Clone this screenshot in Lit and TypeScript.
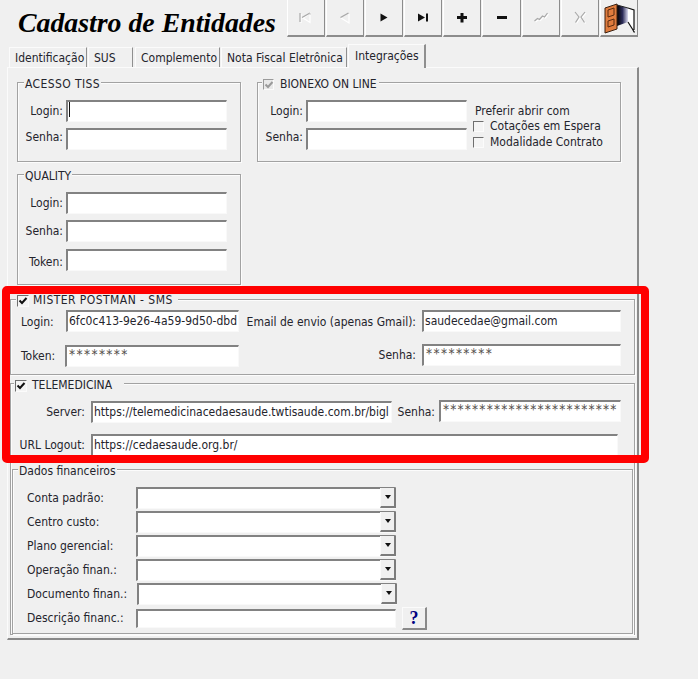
import { LitElement, html, css, svg } from "lit";
import { customElement } from "lit/decorators.js";

const TABS = [
  ["Identificação", 78, 1],
  ["SUS", 45, 2],
  ["Complemento", 85, 1],
  ["Nota Fiscal Eletrônica", 126, 1],
];

const emboss = (d: string, dark: string) => svg`
  <path d="${d}" transform="translate(1 1)" fill="none" stroke="#ffffff" stroke-width="1.200"/>
  <path d="${d}" fill="none" stroke="${dark}" stroke-width="1.200"/>`;

const ICONS = [
  svg`${emboss("M2 4v9", "#a8a8a8")}<path d="M5 9l7 4.500v-9z" fill="none" stroke="#fff" stroke-width="1.200"/><path d="M4 8.500l8-4.500" fill="none" stroke="#a8a8a8" stroke-width="1.400"/><path d="M12 4v2" stroke="#ccc"/>`,
  svg`<path d="M4 9l8 5v-9" fill="none" stroke="#fff" stroke-width="1.200"/><path d="M3.500 8.500l8-4.500" fill="none" stroke="#a8a8a8" stroke-width="1.400"/>`,
  svg`<path d="M4.500 4.500l7 4-7 4z" fill="#111"/>`,
  svg`<path d="M3 4.500l7 4-7 4z" fill="#111"/><rect x="11" y="4.500" width="2" height="8" fill="#111"/>`,
  svg`<path d="M6.500 4h3v3h3.500v3h-3.500v3.500h-3v-3.500h-3.500v-3h3.500z" fill="#111"/>`,
  svg`<rect x="3" y="7" width="10" height="3" fill="#111"/>`,
  emboss("M1.500 12l3-2.500 2 1 3-3.500 2 1 3-4", "#a8a8a8"),
  emboss("M3 3l4 5-3.500 5.500M13 3l-4 5 3.500 5.500", "#a8a8a8"),
];

@customElement("app-root")
export class AppRoot extends LitElement {
  static styles = css`
    :host {
      display: block;
      width: 698px;
      height: 679px;
      background: #f0f0f0;
      font-family: "DejaVu Sans Condensed", "DejaVu Sans", sans-serif;
      font-size: 12px;
      color: #24242c;
      overflow: hidden;
    }
    .root { position: relative; width: 698px; height: 679px; }
    .header { display: flex; height: 45px; }
    .title {
      width: 269px;
      padding: 5px 0 0 18px;
      box-sizing: content-box;
      font: italic bold 27.800px/36px "Liberation Serif", serif;
      color: #000;
      white-space: nowrap;
    }
    .toolbar { display: flex; height: 37px; }
    .tool {
      width: 36.100px;
      height: 35px;
      margin-right: 1px;
      background: #f0f0f0;
      border-right: 1.500px solid #8c8c8c;
      border-bottom: 2px solid #8c8c8c;
      border-left: 0.500px solid #fff;
      display: flex;
      align-items: center;
      justify-content: center;
      box-sizing: content-box;
    }
    .tool svg { width: 16px; height: 17px; }
    .tool .door { width: 32px; height: 32px; }
    .tabs { display: flex; height: 22px; padding-left: 9px; align-items: flex-end; position: relative; z-index: 1; }
    .tab {
      height: 20px;
      line-height: 21px;
      padding-left: 5px;
      text-align: left;
      white-space: nowrap;
      box-sizing: border-box;
      border-top: 1px solid #fbfbfb;
      border-left: 1px solid #fbfbfb;
      border-right: 1.500px solid #8f8f8f;
    }
    .tab.active {
      width: 78px;
      height: 24px;
      margin-bottom: -1px;
      line-height: 22px;
      padding-left: 6px;
      background: #f0f0f0;
      border-right-width: 2px;
    }
    .panel {
      margin-left: 7px;
      width: 632px;
      height: 573px;
      box-sizing: border-box;
      border-top: 1px solid #fbfbfb;
      border-left: 1px solid #fbfbfb;
      border-right: 2px solid #8a8a8a;
      border-bottom: 2px solid #8a8a8a;
      padding-top: 14px;
    }
    .top { display: flex; gap: 16px; margin-left: 9px; align-items: flex-start; }
    .col { display: flex; flex-direction: column; gap: 12px; }
    .group {
      position: relative;
      box-sizing: border-box;
      border: 1px solid #a2a2a2;
      box-shadow: 1px 1px 0 #fcfcfc, inset 1px 1px 0 #fcfcfc;
    }
    .legend {
      position: absolute;
      left: 6px;
      top: -6px;
      height: 15px;
      line-height: 15px;
      padding: 0 1px;
      display: flex;
      align-items: center;
      gap: 5px;
      background: #f0f0f0;
      white-space: nowrap;
    }
    .ls-a { letter-spacing: 0.400px; }
    .lb { left: 4px; top: -6px; gap: 6px; padding-right: 2px; }
    .lp { left: 5px; top: -7px; gap: 4px; padding-right: 5px; letter-spacing: 0.450px; }
    .lt { left: 3px; top: -6px; padding-right: 12px; }
    .ld { left: 5px; }
    .check {
      width: 11px;
      height: 11px;
      box-sizing: border-box;
      border-top: 1.500px solid #6e6e6e;
      border-left: 1.500px solid #6e6e6e;
      border-right: 1px solid #fbfbfb;
      border-bottom: 1px solid #fbfbfb;
      background: #f4f4f4;
      flex: none;
      display: block;
      position: relative;
    }
    .check svg { position: absolute; left: 0; top: 0; width: 10px; height: 10px; }
    .check.big { width: 12px; height: 12px; }
    .check.dis { background: #e9e9e9; border-color: #9a9a9a #fbfbfb #fbfbfb #9a9a9a; }
    .acesso { width: 224px; height: 80px; padding-top: 17px; }
    .quality { width: 224px; height: 111px; padding-top: 17px; }
    .bionexo { width: 364px; height: 80px; padding-top: 17px; display: flex; }
    .rows { display: flex; flex-direction: column; gap: 6px; }
    .row { display: flex; align-items: center; gap: 3px; }
    .row.low { margin-top: 1px; }
    .lab { text-align: right; white-space: nowrap; flex: none; }
    .w45 { width: 45px; }
    .up { margin-bottom: 5px; }
    .down { margin-top: 4px; }
    .input {
      height: 22px;
      line-height: 18px;
      box-sizing: border-box;
      flex: none;
      background: #fff;
      border-top: 2px solid #828282;
      border-left: 2px solid #828282;
      border-right: 1px solid #f9f9f9;
      border-bottom: 1px solid #f9f9f9;
      padding-left: 1px;
      white-space: nowrap;
      overflow: hidden;
      color: #24242c;
    }
    .w161 { width: 161px; }
    .caret { display: inline-block; width: 1px; height: 15px; background: #111; vertical-align: -2px; }
    .opts { margin-left: 6px; padding-left: 0; }
    .prefer { margin: 4px 0 0 2px; line-height: 14px; }
    .opt { display: flex; align-items: center; gap: 6px; height: 16px; }
    .wide { box-sizing: border-box; margin-left: 2px; width: 625px; }
    .postman { margin-top: 14px; height: 76px; padding: 10px 0 0 10px; }
    .pr { display: flex; align-items: flex-start; }
    .pr + .pr { margin-top: 10px; }
    .pr .lab { line-height: 24px; }
    .plog { width: 45px; text-align: left; }
    .ptok { width: 44px; text-align: left; }
    .pr .ptok { line-height: 25px; }
    .pr .psen { line-height: 22px; }
    .pemail { width: 170px; margin: 0 6px 0 7px; }
    .in173 { width: 173px; }
    .in174 { width: 174px; margin-top: 1px; }
    .in199 { width: 199px; }
    .stars {
      color: #544f4b;
      font-size: 13.500px;
      letter-spacing: 1.400px;
      line-height: 14px;
      padding-left: 2px;
    }
    .stars.tight { letter-spacing: 1.200px; }
    .tele { margin-top: 8px; height: 252px; padding: 17px 0 0 0; }
    .tr { display: flex; align-items: flex-start; }
    .tr + .tr { margin-top: 11px; }
    .tr .lab { line-height: 22px; }
    .tlab { width: 74px; margin-right: 6px; }
    .in301 { width: 301px; }
    .tsen { width: 40px; margin: 0 4px 0 3px; }
    .in182 { width: 182px; margin-top: -1px; }
    .in527 { width: 527px; }
    .dados {
      margin: 13px 0 0 1px;
      width: 621px;
      height: 165px;
      padding: 17px 0 0 14px;
      display: flex;
      flex-direction: column;
      gap: 2px;
    }
    .dr { display: flex; align-items: center; height: 22px; }
    .dr .lab { width: 109px; text-align: left; }
    .combo { position: relative; width: 260px; height: 22px; }
    .shift { margin-left: 1px; }
    .arrow {
      position: absolute;
      right: 0;
      top: 1px;
      width: 16px;
      height: 20px;
      background: #f0f0f0;
      border-right: 2px solid #7c7c7c;
      border-bottom: 2px solid #7c7c7c;
      border-left: 1px solid #fbfbfb;
      box-sizing: border-box;
      display: flex;
      align-items: center;
      justify-content: center;
    }
    .arrow i { display: block; border: 3.500px solid transparent; border-top: 4px solid #111; border-bottom: 0; }
    .in260 { width: 260px; }
    .in260s { width: 260px; height: 19px; }
    .helprow { display: flex; align-items: center; height: 24px; margin-top: -1px; }
    .helprow .lab { width: 109px; text-align: left; }
    .help {
      margin-left: 6px;
      width: 25px;
      height: 23px;
      box-sizing: border-box;
      border-top: 1px solid #fbfbfb;
      border-left: 1px solid #fbfbfb;
      border-right: 2px solid #8a8a8a;
      border-bottom: 2px solid #8a8a8a;
      font: bold 18px/21px "Liberation Serif", serif;
      color: #000080;
      text-align: center;
    }
    .red {
      position: absolute;
      left: 2px;
      top: 286px;
      width: 647px;
      height: 177px;
      box-sizing: border-box;
      border: 8px solid #ff0000;
      border-radius: 5px;
      pointer-events: none;
    }
  `;

  private check(on: boolean, dis = false, big = false) {
    const color = dis ? "#9a9a9a" : "#111";
    return html`<span class="check ${dis ? "dis" : ""} ${big ? "big" : ""}">${on
      ? html`<svg viewBox="0 0 10 10"><path d="M1.500 4.500l2.500 2.500 4.500-5" fill="none" stroke=${color} stroke-width="2"/></svg>`
      : ""}</span>`;
  }

  private door() {
    return html`<svg class="door" viewBox="0 0 32 32">
      <defs><linearGradient id="g" x1="0" x2="1"><stop offset="0" stop-color="#000"/><stop offset="0.500" stop-color="#2c2c58"/><stop offset="1" stop-color="#dcdcf0"/></linearGradient></defs>
      <path d="M25 6l6 2v20l-6-8z" fill="#fff"/>
      <path d="M14 3l11 3v14l-11 4z" fill="url(#g)"/>
      <path d="M25 6l6 2v20M25 20l5 8 1 2 1 0" fill="none" stroke="#111" stroke-width="1.200"/>
      <path d="M14 3l11 3" fill="none" stroke="#222" stroke-width="1"/>
      <path d="M2 6l12-4v25l-12 4z" fill="#e07c3e" stroke="#3a2010" stroke-width="1"/>
      <path d="M5 8l6-2v7l-6 2zM5 19l6-2v6l-6 2z" fill="none" stroke="#5a2c10" stroke-width="1"/>
    </svg>`;
  }

  private loginRows(labels: string[], caret: boolean) {
    return labels.map(
      (l, i) => html`<div class="row">
        <span class="lab w45 ${i === 1 ? "up" : ""}">${l}:</span>
        <div class="input w161">${i === 0 && caret ? html`<span class="caret"></span>` : ""}</div>
      </div>`
    );
  }

  render() {
    const combos = ["Conta padrão:", "Centro custo:", "Plano gerencial:", "Operação finan.:", "Documento finan.:"];
    return html`<div class="root">
      <div class="header">
        <div class="title">Cadastro de Entidades</div>
        <div class="toolbar">
          ${ICONS.map((i) => html`<div class="tool"><svg viewBox="0 0 16 17">${i}</svg></div>`)}
          <div class="tool">${this.door()}</div>
        </div>
      </div>
      <div class="tabs">
        ${TABS.map(
          ([t, w, m]) => html`<div class="tab" style="width:${w}px;margin-right:${m}px">${t}</div>`
        )}
        <div class="tab active">Integrações</div>
      </div>
      <div class="panel">
        <div class="top">
          <div class="col">
            <div class="group acesso">
              <div class="legend ls-a">ACESSO TISS</div>
              <div class="rows">${this.loginRows(["Login", "Senha"], true)}</div>
            </div>
            <div class="group quality">
              <div class="legend">QUALITY</div>
              <div class="rows">
                <div class="row"><span class="lab w45">Login:</span><div class="input w161"></div></div>
                <div class="row"><span class="lab w45">Senha:</span><div class="input w161"></div></div>
                <div class="row low"><span class="lab w45 down">Token:</span><div class="input w161"></div></div>
              </div>
            </div>
          </div>
          <div class="group bionexo">
            <div class="legend lb">${this.check(true, true)}BIONEXO ON LINE</div>
            <div class="rows">${this.loginRows(["Login", "Senha"], false)}</div>
            <div class="opts">
              <div class="prefer">Preferir abrir com</div>
              <div class="opt">${this.check(false)}Cotações em Espera</div>
              <div class="opt">${this.check(false)}Modalidade Contrato</div>
            </div>
          </div>
        </div>
        <div class="group wide postman">
          <div class="legend lp">${this.check(true, false, true)}MISTER POSTMAN - SMS</div>
          <div class="pr">
            <span class="lab plog">Login:</span>
            <div class="input in173">6fc0c413-9e26-4a59-9d50-dbd</div>
            <span class="lab pemail">Email de envio (apenas Gmail):</span>
            <div class="input in199">saudecedae@gmail.com</div>
          </div>
          <div class="pr">
            <span class="lab ptok">Token:</span>
            <div class="input in174 stars">********</div>
            <span class="lab pemail psen">Senha:</span>
            <div class="input in199 stars">*********</div>
          </div>
        </div>
        <div class="group wide tele">
          <div class="legend lt">${this.check(true, false, true)}TELEMEDICINA</div>
          <div class="tr">
            <span class="lab tlab">Server:</span>
            <div class="input in301">https://telemedicinacedaesaude.twtisaude.com.br/bigl</div>
            <span class="lab tsen">Senha:</span>
            <div class="input in182 stars tight">************************</div>
          </div>
          <div class="tr">
            <span class="lab tlab">URL Logout:</span>
            <div class="input in527">https://cedaesaude.org.br/</div>
          </div>
          <div class="group dados">
            <div class="legend ld">Dados financeiros</div>
            ${combos.map(
              (c, i) => html`<div class="dr">
                <span class="lab">${c}</span>
                <div class="combo ${i === 4 ? "shift" : ""}"><div class="input in260"></div><div class="arrow"><i></i></div></div>
              </div>`
            )}
            <div class="helprow">
              <span class="lab">Descrição financ.:</span>
              <div class="input in260s"></div>
              <div class="help">?</div>
            </div>
          </div>
        </div>
      </div>
      <div class="red"></div>
    </div>`;
  }
}
